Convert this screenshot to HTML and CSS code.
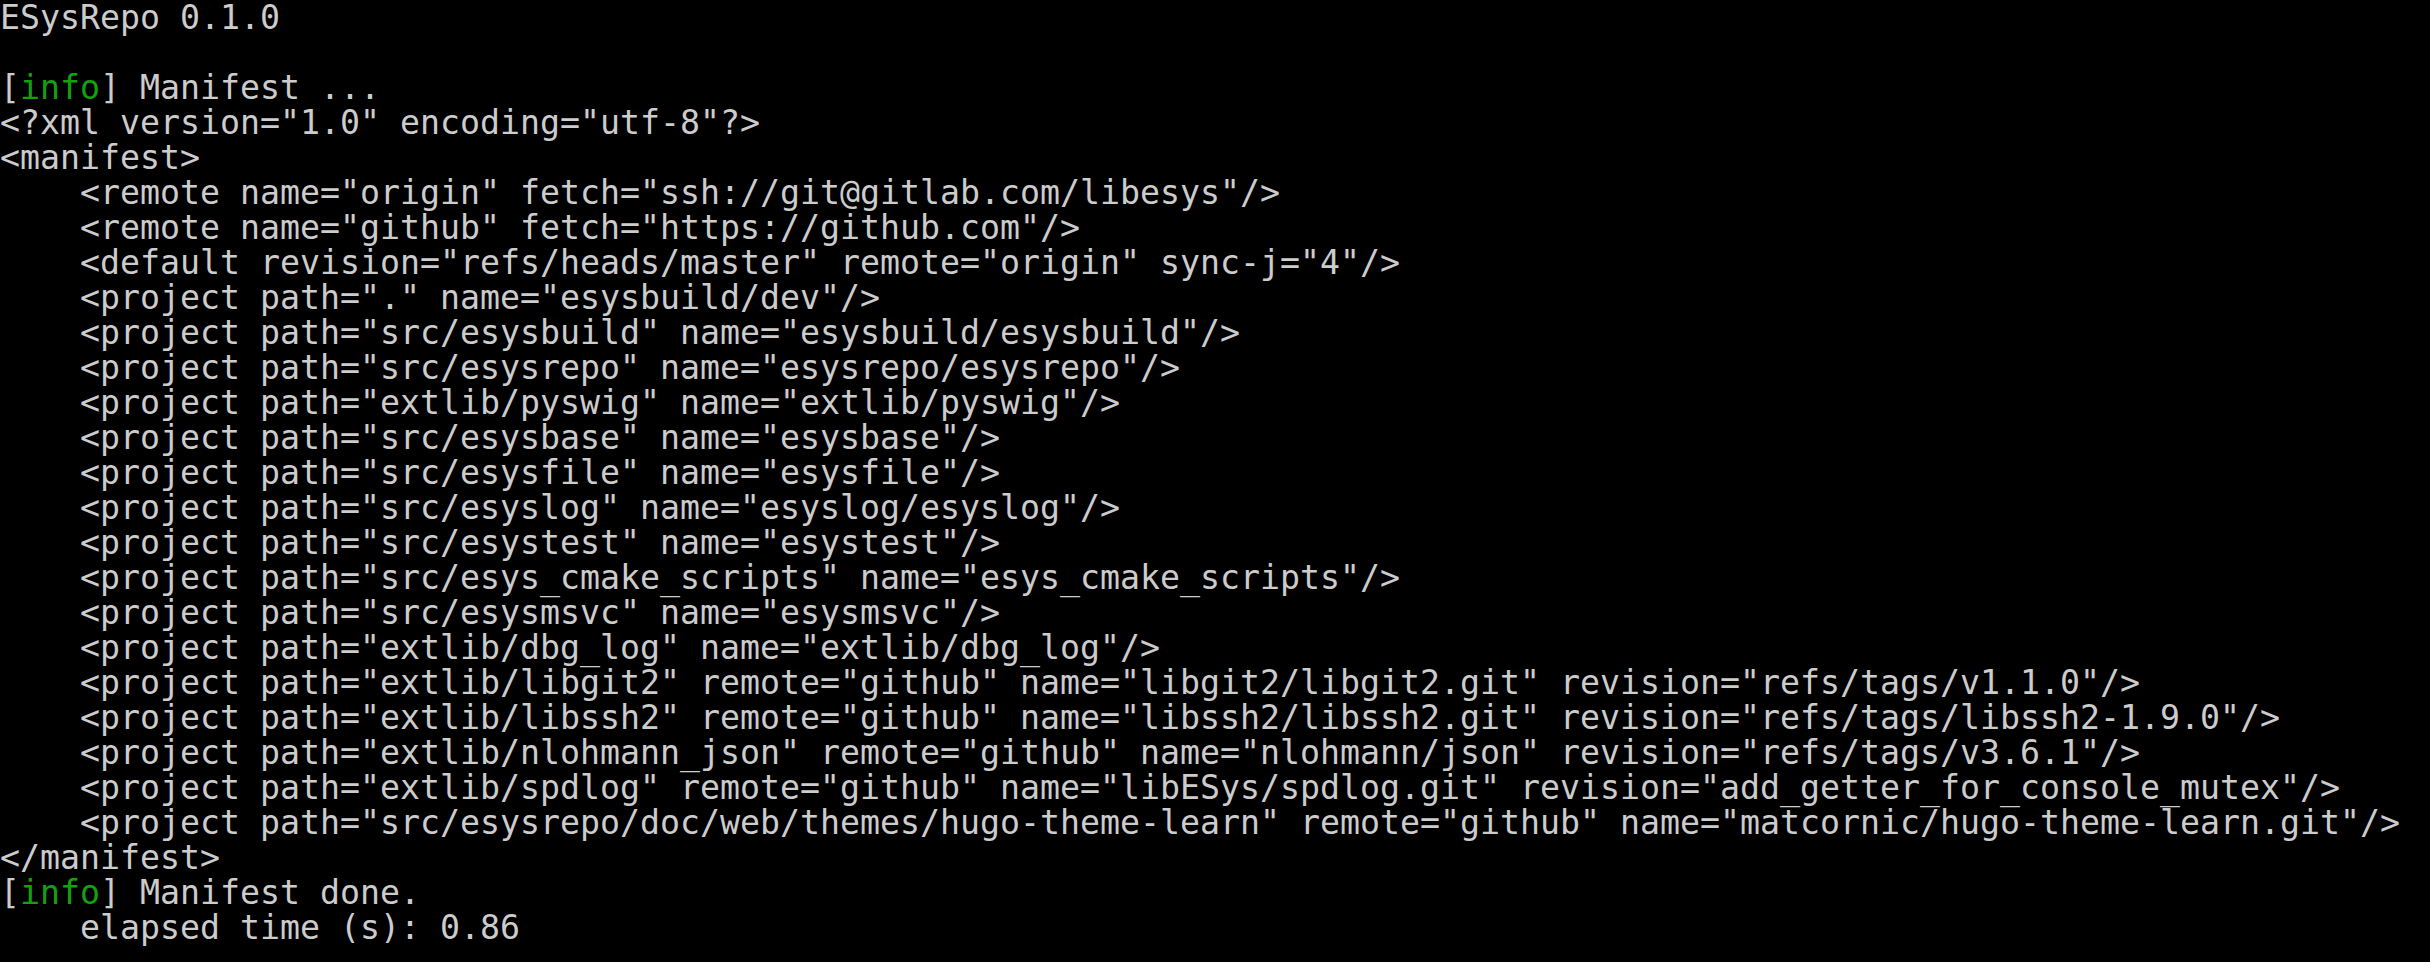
FILE: index.html
```html
<!DOCTYPE html>
<html lang="en">
<head>
<meta charset="utf-8">
<title>ESysRepo</title>
<link rel="stylesheet" href="styles.css">
</head>
<body>
<div class="term">ESysRepo 0.1.0

[<span class="ok">info</span>] Manifest ...
&lt;?xml version="1.0" encoding="utf-8"?&gt;
&lt;manifest&gt;
    &lt;remote name="origin" fetch="ssh://git@gitlab.com/libesys"/&gt;
    &lt;remote name="github" fetch="https://github.com"/&gt;
    &lt;default revision="refs/heads/master" remote="origin" sync-j="4"/&gt;
    &lt;project path="." name="esysbuild/dev"/&gt;
    &lt;project path="src/esysbuild" name="esysbuild/esysbuild"/&gt;
    &lt;project path="src/esysrepo" name="esysrepo/esysrepo"/&gt;
    &lt;project path="extlib/pyswig" name="extlib/pyswig"/&gt;
    &lt;project path="src/esysbase" name="esysbase"/&gt;
    &lt;project path="src/esysfile" name="esysfile"/&gt;
    &lt;project path="src/esyslog" name="esyslog/esyslog"/&gt;
    &lt;project path="src/esystest" name="esystest"/&gt;
    &lt;project path="src/esys_cmake_scripts" name="esys_cmake_scripts"/&gt;
    &lt;project path="src/esysmsvc" name="esysmsvc"/&gt;
    &lt;project path="extlib/dbg_log" name="extlib/dbg_log"/&gt;
    &lt;project path="extlib/libgit2" remote="github" name="libgit2/libgit2.git" revision="refs/tags/v1.1.0"/&gt;
    &lt;project path="extlib/libssh2" remote="github" name="libssh2/libssh2.git" revision="refs/tags/libssh2-1.9.0"/&gt;
    &lt;project path="extlib/nlohmann_json" remote="github" name="nlohmann/json" revision="refs/tags/v3.6.1"/&gt;
    &lt;project path="extlib/spdlog" remote="github" name="libESys/spdlog.git" revision="add_getter_for_console_mutex"/&gt;
    &lt;project path="src/esysrepo/doc/web/themes/hugo-theme-learn" remote="github" name="matcornic/hugo-theme-learn.git"/&gt;
&lt;/manifest&gt;
[<span class="ok">info</span>] Manifest done.
    elapsed time (s): 0.86</div>
</body>
</html>
```

FILE: styles.css
```css
html, body {
  margin: 0;
  padding: 0;
  background: #000000;
}

body {
  width: 2430px;
  height: 962px;
  overflow: hidden;
}

.term {
  font-family: "DejaVu Sans Mono", "Liberation Mono", monospace;
  font-size: 33.22px;
  line-height: 35px;
  color: #cccccc;
  white-space: pre;
  margin: 0;
  padding: 0;
}

.ok {
  color: #13a10e;
}
```
